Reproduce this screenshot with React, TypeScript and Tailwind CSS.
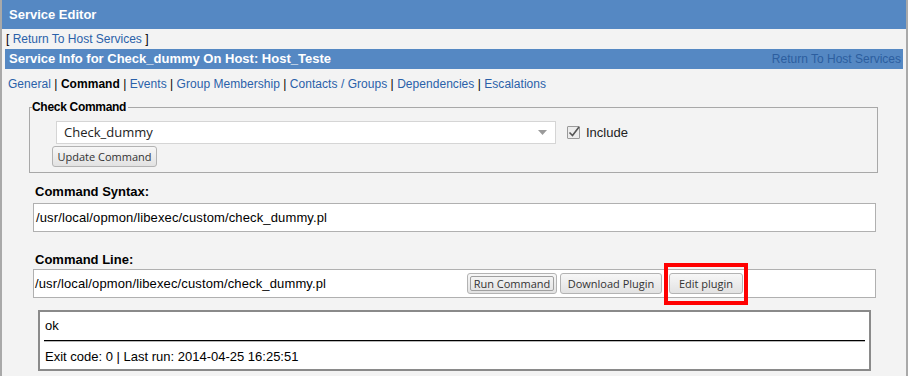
import React from "react";

const linkCls = "text-[#2a61a9]";

const GtkButton: React.FC<{ label: string; width: string; focused?: boolean }> = ({
  label,
  width,
  focused,
}) => (
  <button
    type="button"
    className={`${width} h-[21px] rounded-[3px] border border-[#b3b3b3] bg-gradient-to-b from-[#f7f7f7] to-[#e2e2e2] text-[11px] text-[#333] flex items-center justify-center p-[2px] [font-family:'Open_Sans',sans-serif]`}
  >
    {focused ? (
      <span className="w-full h-full border border-[#a0a0a0] rounded-[2px] flex items-center justify-center leading-none">
        {label}
      </span>
    ) : (
      <span className="leading-none">{label}</span>
    )}
  </button>
);

export default function App() {
  const tabs = ["General", "Command", "Events", "Group Membership", "Contacts / Groups", "Dependencies", "Escalations"];

  return (
    <div className="w-[908px] h-[376px] overflow-hidden bg-[#f3f3f3] border-l-2 border-r-2 border-[#a9a9a9] [font-family:'Liberation_Sans',Arial,sans-serif] text-black">
      {/* title bar */}
      <div className="h-[29px] bg-[#5588c3] flex items-center pl-[7px] text-white font-bold text-[13px]">
        Service Editor
      </div>

      <div className="px-[3px]">
        <div className="h-[20px] flex items-center text-[12px] pl-[1px]">
          [&nbsp;<span className={linkCls}>Return To Host Services</span>&nbsp;]
        </div>

        <div className="h-[20px] bg-[#5588c3] flex items-center justify-between pl-[4px] pr-[2px] text-[13px]">
          <span className="text-white font-bold">Service Info for Check_dummy On Host: Host_Teste</span>
          <span className="text-[#2c5e9f] text-[12px]">Return To Host Services</span>
        </div>

        {/* tabs */}
        <div className="pt-[8px] pl-[3px] text-[12px] leading-[14px] tracking-[0.04px]">
          {tabs.map((t, i) => (
            <React.Fragment key={t}>
              {i > 0 && <span> | </span>}
              {t === "Command" ? <span className="font-bold">{t}</span> : <span className={linkCls}>{t}</span>}
            </React.Fragment>
          ))}
        </div>

        {/* check command fieldset */}
        <fieldset className="mt-[9px] ml-[24px] mr-[25px] border border-[#a8a8a8] p-0">
          <legend className="ml-[2px] pr-[2px] text-[12px] leading-[14px] font-bold tracking-[-0.3px]">Check Command</legend>
          <div className="pl-[26px] pt-[7px] pb-[5px]">
            <div className="flex items-center">
              <div className="w-[500px] h-[23px] bg-white border border-[#d5d5d5] flex items-center justify-between pl-[7px] pr-[8px] text-[13px] text-[#222] [font-family:'Open_Sans',sans-serif]">
                <span>Check_dummy</span>
                <svg width="9" height="5" viewBox="0 0 9 5">
                  <path d="M0 0 H9 L4.5 5 Z" fill="#9a9a9a" />
                </svg>
              </div>
              <div className="ml-[11px] w-[13px] h-[13px] border border-[#9a9a9a] bg-[#ececec] rounded-[1px] flex items-center justify-center">
                <svg width="13" height="13" viewBox="0 0 13 13" className="overflow-visible">
                  <path d="M2.5 6.5 L5.5 9.5 L12 1" fill="none" stroke="#555" strokeWidth="1.6" />
                </svg>
              </div>
              <span className="ml-[6px] text-[13px] text-[#222]">Include</span>
            </div>
            <div className="mt-[2px] -ml-[4px]">
              <GtkButton label="Update Command" width="w-[105px]" />
            </div>
          </div>
        </fieldset>

        {/* command syntax */}
        <div className="mt-[11px] ml-[30px] text-[13px] leading-[16px] font-bold">Command Syntax:</div>
        <div className="mt-[3px] ml-[28px] w-[843px] h-[29px] bg-white border border-[#b0b0b0] flex items-center pl-[2px] text-[13px] tracking-[0.13px]">
          /usr/local/opmon/libexec/custom/check_dummy.pl
        </div>

        {/* command line */}
        <div className="mt-[20px] ml-[30px] text-[13px] leading-[16px] font-bold">Command Line:</div>
        <div className="relative mt-[1px] ml-[28px] w-[843px] h-[29px] bg-white border border-[#b0b0b0] flex items-center text-[13px]">
          <span className="w-[433px] pl-[1px] tracking-[0.13px]">/usr/local/opmon/libexec/custom/check_dummy.pl</span>
          <GtkButton label="Run Command" width="w-[90px]" focused />
          <div className="ml-[3px]">
            <GtkButton label="Download Plugin" width="w-[102px]" />
          </div>
          <div className="ml-[7px]">
            <GtkButton label="Edit plugin" width="w-[74px]" />
          </div>
          <div className="absolute left-[630px] top-[-7px] w-[84px] h-[42px] border-4 border-[#ff0000]" />
        </div>

        {/* output */}
        <div className="mt-[12px] ml-[33px] w-[833px] h-[61px] bg-white border-2 border-[#8a8a8a] px-[4px] pt-[6px] text-[13px] leading-[15px]">
          <div className="pl-[1px]">ok</div>
          <div className="mt-[7px] border-t border-black border-b border-b-[#b8b8b8]" />
          <div className="mt-[7px] pl-[1px]">Exit code: 0 | Last run: 2014-04-25 16:25:51</div>
        </div>
      </div>
    </div>
  );
}
